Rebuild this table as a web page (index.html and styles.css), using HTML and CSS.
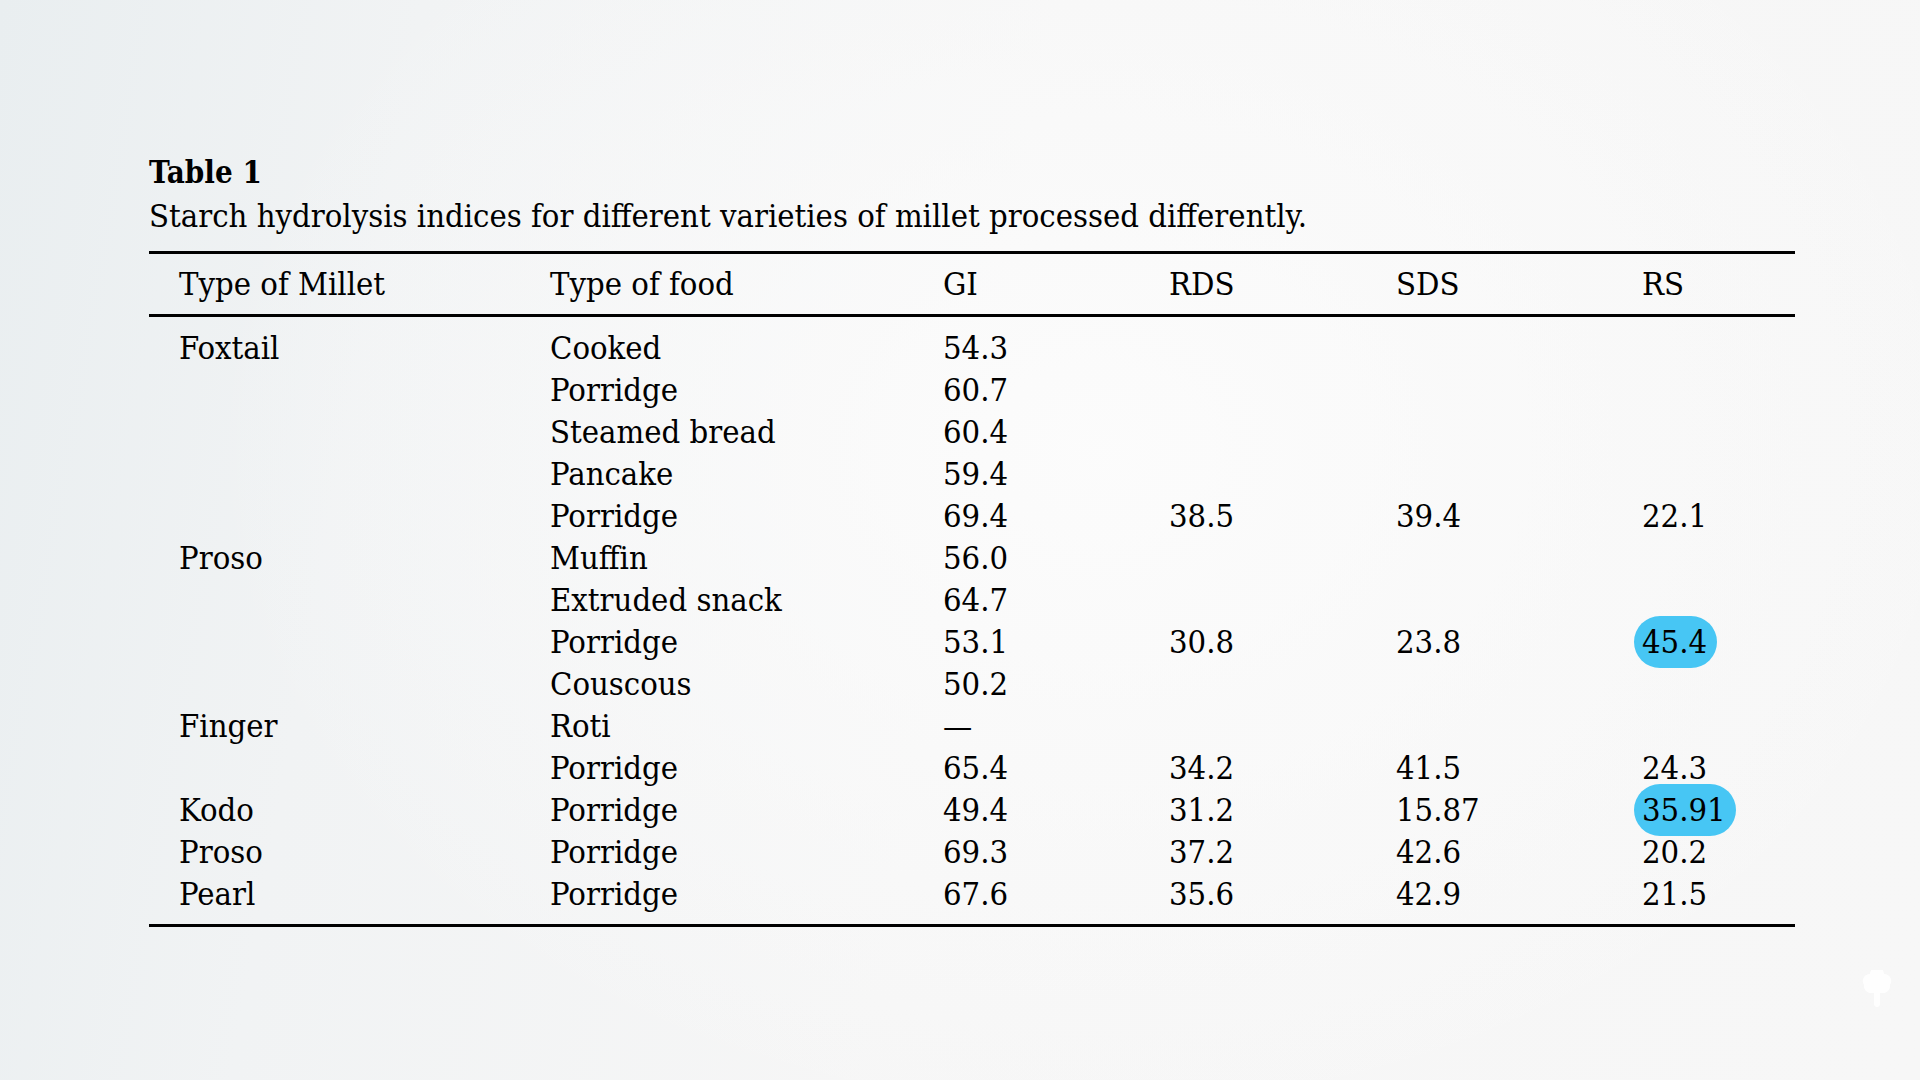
FILE: index.html
```html
<!DOCTYPE html>
<html lang="en">
<head>
<meta charset="utf-8">
<title>Table 1</title>
<link rel="stylesheet" href="styles.css">
</head>
<body>
<main class="page">
  <section class="table-block">
    <h1 class="table-title">Table 1</h1>
    <p class="table-caption">Starch hydrolysis indices for different varieties of millet processed differently.</p>
    <table class="data">
      <colgroup>
        <col class="c1"><col class="c2"><col class="c3"><col class="c4"><col class="c5"><col class="c6">
      </colgroup>
      <thead>
        <tr><th>Type of Millet</th><th>Type of food</th><th>GI</th><th>RDS</th><th>SDS</th><th>RS</th></tr>
      </thead>
      <tbody>
        <tr class="first"><td>Foxtail</td><td>Cooked</td><td>54.3</td><td></td><td></td><td></td></tr>
        <tr><td></td><td>Porridge</td><td>60.7</td><td></td><td></td><td></td></tr>
        <tr><td></td><td>Steamed bread</td><td>60.4</td><td></td><td></td><td></td></tr>
        <tr><td></td><td>Pancake</td><td>59.4</td><td></td><td></td><td></td></tr>
        <tr><td></td><td>Porridge</td><td>69.4</td><td>38.5</td><td>39.4</td><td>22.1</td></tr>
        <tr><td>Proso</td><td>Muffin</td><td>56.0</td><td></td><td></td><td></td></tr>
        <tr><td></td><td>Extruded snack</td><td>64.7</td><td></td><td></td><td></td></tr>
        <tr><td></td><td>Porridge</td><td>53.1</td><td>30.8</td><td>23.8</td><td><span class="hl">45.4</span></td></tr>
        <tr><td></td><td>Couscous</td><td>50.2</td><td></td><td></td><td></td></tr>
        <tr><td>Finger</td><td>Roti</td><td>—</td><td></td><td></td><td></td></tr>
        <tr><td></td><td>Porridge</td><td>65.4</td><td>34.2</td><td>41.5</td><td>24.3</td></tr>
        <tr><td>Kodo</td><td>Porridge</td><td>49.4</td><td>31.2</td><td>15.87</td><td><span class="hl">35.91</span></td></tr>
        <tr><td>Proso</td><td>Porridge</td><td>69.3</td><td>37.2</td><td>42.6</td><td>20.2</td></tr>
        <tr class="last"><td>Pearl</td><td>Porridge</td><td>67.6</td><td>35.6</td><td>42.9</td><td>21.5</td></tr>
      </tbody>
    </table>
  </section>
</main>
<svg class="watermark" width="32" height="40" viewBox="0 0 32 40" aria-hidden="true">
  <path d="M9 4 a7 7 0 0 1 14 0 a7 7 0 0 1 6 11 a7 7 0 0 1 -8 8 h-10 a7 7 0 0 1 -8 -8 a7 7 0 0 1 6 -11z" fill="#ffffff"/>
  <rect x="13" y="21" width="6" height="16" rx="3" fill="#ffffff"/>
</svg>
</body>
</html>
```
FILE: styles.css
```css
html, body {
  margin: 0;
  padding: 0;
  width: 1920px;
  height: 1080px;
  overflow: hidden;
}
body {
  position: relative;
  background:
    radial-gradient(ellipse 900px 700px at 1100px 450px, rgba(252,252,252,0.95), rgba(252,252,252,0) 100%),
    linear-gradient(100deg, #e9eef0 0%, #f1f3f4 20%, #f6f6f6 50%, #f7f7f7 100%);
  color: #000;
  font-family: "DejaVu Serif Condensed", "DejaVu Serif", serif;
  font-stretch: condensed;
}
.page {
  padding: 150px 125px 0 149px;
}
.table-block {
  width: 1646px;
}
.table-title {
  margin: 0;
  font-size: 31px;
  font-weight: 700;
  line-height: 44px;
}
.table-caption {
  margin: 0 0 13px 0;
  font-size: 32.5px;
  line-height: 44px;
}
.data {
  width: 1646px;
  border-collapse: collapse;
  table-layout: fixed;
  font-size: 32.5px;
  border-top: 3px solid #000;
  border-bottom: 3px solid #000;
}
.c1 { width: 401px; }
.c2 { width: 393px; }
.c3 { width: 226px; }
.c4 { width: 227px; }
.c5 { width: 246px; }
.c6 { width: 153px; }
.data th, .data td {
  text-align: left;
  font-weight: 400;
  padding: 0;
  line-height: 42px;
  white-space: nowrap;
}
.data th:first-child, .data td:first-child {
  padding-left: 30px;
}
.data thead th {
  padding-top: 9px;
  padding-bottom: 9px;
  border-bottom: 3px solid #000;
}
.data tbody tr.first td { padding-top: 10px; }
.data tbody tr.last td { padding-bottom: 9px; }
.hl {
  background: #47c6f4;
  border-radius: 26px;
  padding: 7px 10px 7px 8px;
  margin-left: -8px;
}
.watermark {
  position: absolute;
  left: 1861px;
  top: 970px;
  opacity: 0.9;
}
```
